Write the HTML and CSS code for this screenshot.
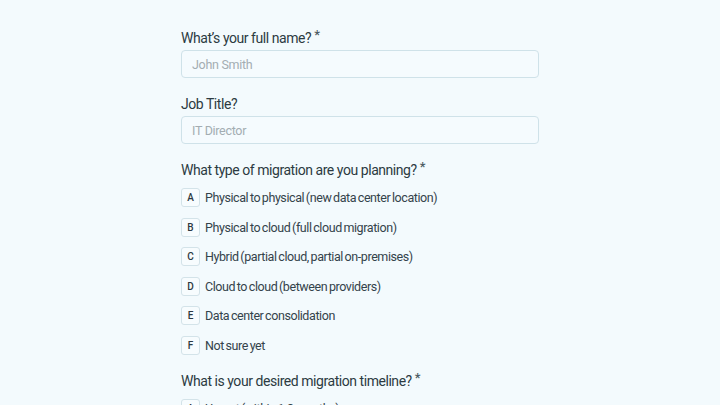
FILE: index.html
```html
<!DOCTYPE html>
<html lang="en">
<head>
    <meta charset="UTF-8">
    <meta name="viewport" content="width=device-width, initial-scale=1.0">
    <title>Migration Assessment</title>
    <link rel="stylesheet" href="styles.css">
</head>
<body>
    <form class="survey-form">
        <div class="form-group">
            <label for="fullName">What’s your full name? <span class="required">*</span></label>
            <input type="text" id="fullName" name="fullName" placeholder="John Smith">
        </div>
        <div class="form-group">
            <label for="jobTitle">Job Title?</label>
            <input type="text" id="jobTitle" name="jobTitle" placeholder="IT Director">
        </div>
        <div class="form-group">
            <div class="question">What type of migration are you planning? <span class="required">*</span></div>
            <ul class="choices">
                <li class="choice"><span class="choice-key">A</span>Physical to physical (new data center location)</li>
                <li class="choice"><span class="choice-key">B</span>Physical to cloud (full cloud migration)</li>
                <li class="choice"><span class="choice-key">C</span>Hybrid (partial cloud, partial on-premises)</li>
                <li class="choice"><span class="choice-key">D</span>Cloud to cloud (between providers)</li>
                <li class="choice"><span class="choice-key">E</span>Data center consolidation</li>
                <li class="choice"><span class="choice-key">F</span>Not sure yet</li>
            </ul>
        </div>
        <div class="form-group">
            <div class="question">What is your desired migration timeline? <span class="required">*</span></div>
            <ul class="choices">
                <li class="choice"><span class="choice-key">A</span>Urgent (within 1-3 months)</li>
            </ul>
        </div>
    </form>
</body>
</html>
```

FILE: styles.css
```css
* {
    margin: 0;
    padding: 0;
    box-sizing: border-box;
    font-family: 'Roboto', sans-serif;
}

body {
    background-color: #f3fafd;
    color: #2c3a42;
}

.survey-form {
    width: 358px;
    margin: 0 auto;
    padding-top: 27px;
}

.form-group {
    margin-bottom: 15px;
}

.form-group label,
.question {
    display: block;
    font-size: 14px;
    line-height: 22px;
    letter-spacing: -0.45px;
    color: #2c3a42;
    margin-bottom: 1px;
}

.question {
    margin-bottom: 7px;
}

.required {
    font-size: 13px;
    font-weight: 500;
    line-height: 0;
    color: #4d5c63;
    vertical-align: 4px;
}

.form-group input {
    display: block;
    width: 100%;
    height: 28px;
    padding: 0 10px;
    border: 1px solid #cfe2e9;
    border-radius: 4px;
    background-color: #f5fbfe;
    font-family: 'Roboto', sans-serif;
    font-size: 12.5px;
    color: #2c3a42;
    letter-spacing: -0.3px;
}

.form-group input::placeholder {
    color: #a3adb2;
}

.form-group input:focus {
    outline: none;
    border-color: #7fb8cc;
}

.choices {
    list-style: none;
    display: flex;
    flex-direction: column;
    gap: 10.6px;
}

.choice {
    display: flex;
    align-items: center;
    height: 19px;
    font-size: 12.5px;
    letter-spacing: -0.42px;
    word-spacing: -1px;
    color: #34434b;
    cursor: pointer;
}

.choice-key {
    display: flex;
    justify-content: center;
    align-items: center;
    flex-shrink: 0;
    width: 19px;
    height: 19px;
    margin-right: 5px;
    border: 1px solid #d3e3e9;
    border-radius: 3px;
    background-color: #f7fcfe;
    font-size: 10px;
    font-weight: 500;
    letter-spacing: 0;
    word-spacing: 0;
    color: #2c3a42;
}
```
